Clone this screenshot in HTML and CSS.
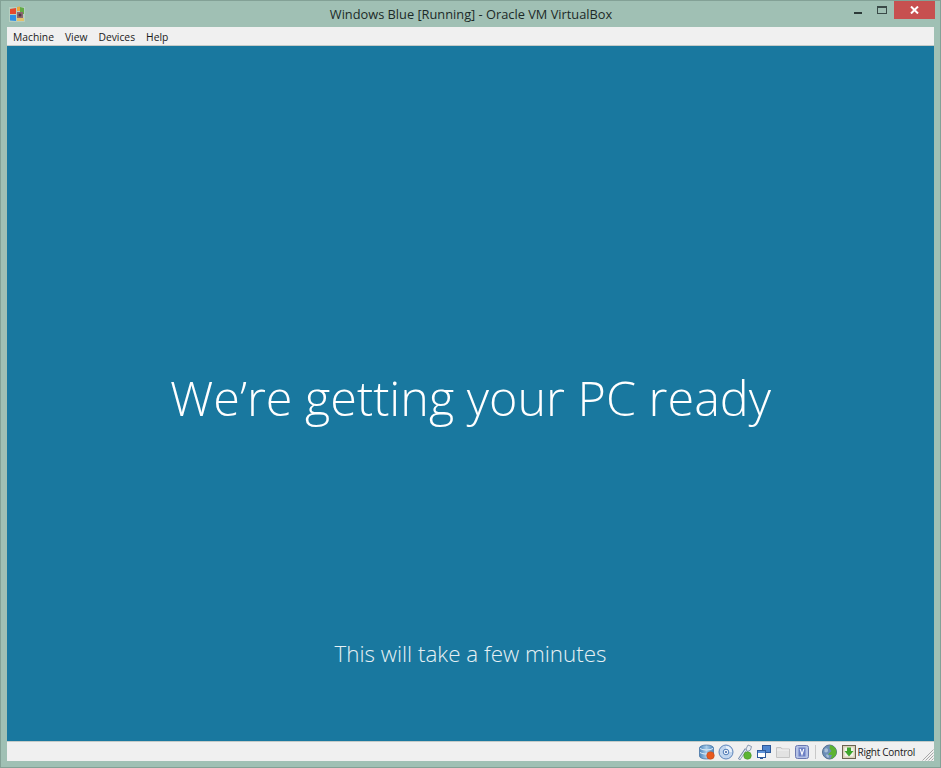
FILE: index.html
```html
<!DOCTYPE html>
<html lang="en">
<head>
<meta charset="utf-8">
<title>Windows Blue [Running] - Oracle VM VirtualBox</title>
<link rel="stylesheet" href="styles.css">
</head>
<body>
<div class="window">
  <header class="titlebar">
    <div class="brand">
      <svg class="app-icon" viewBox="0 0 16 16" width="16" height="16">
        <rect x="0" y="1" width="16" height="15" fill="#c9d8c8" opacity=".55"/>
        <path d="M1 3l6-1v6H1z" fill="#e4492e"/>
        <path d="M1 9h6v6l-6-.5z" fill="#2f8fe4"/>
        <path d="M8 1l3-.5V5H8z" fill="#eba63e"/>
        <path d="M11 1l4 1v6h-4z" fill="#62ab45"/>
        <rect x="8" y="6" width="6" height="6" fill="#8b6670"/>
        <circle cx="11" cy="9" r="1.500" fill="#4e3b44"/>
        <path d="M8 12h7v3H8z" fill="#e2c26c"/>
      </svg>
    </div>
    <div class="title">Windows Blue [Running] - Oracle VM VirtualBox</div>
    <div class="controls">
      <span class="ctl min"></span>
      <span class="ctl max"></span>
      <span class="ctl close">
        <svg viewBox="0 0 9 8" width="9" height="8"><path d="M1 .5l7 7M8 .5l-7 7" stroke="#fff" stroke-width="2" fill="none"/></svg>
      </span>
    </div>
  </header>
  <nav class="menubar">
    <span class="menu">Machine</span>
    <span class="menu">View</span>
    <span class="menu">Devices</span>
    <span class="menu">Help</span>
  </nav>
  <main class="screen">
    <h1 class="headline">We’re getting your PC ready</h1>
    <p class="subline">This will take a few minutes</p>
  </main>
  <footer class="statusbar">
    <svg class="si" viewBox="0 0 16 16" width="16" height="16"><defs><linearGradient id="hd" x1="0" y1="0" x2="1" y2="0"><stop offset="0" stop-color="#4d86bd"/><stop offset=".5" stop-color="#a9cdea"/><stop offset="1" stop-color="#4d86bd"/></linearGradient></defs><path d="M.5 4c0-4 14-4 14 0v8c0 4-14 4-14 0z" fill="url(#hd)" stroke="#3e6f9f" stroke-width=".7"/><path d="M1 4.500c3 2 10 2 13 0M1 8.500c3 2 10 2 13 0" stroke="#e6f1fa" fill="none"/><circle cx="11.500" cy="11.500" r="3.800" fill="#e85a1e" stroke="#b8441a" stroke-width=".5"/></svg>
    <svg class="si" viewBox="0 0 16 16" width="16" height="16"><circle cx="8" cy="8" r="7" fill="#c2d6ee" stroke="#5f86bb"/><path d="M8 2a6 6 0 0 1 6 6H8z" fill="#e9f1fa"/><circle cx="8" cy="8" r="2.800" fill="#eef5fb" stroke="#4f7cb8"/><circle cx="8" cy="8" r="1" fill="#4060a0"/></svg>
    <svg class="si" viewBox="0 0 16 16" width="16" height="16"><path d="M2 15.500L9 5" stroke="#6f86a8" stroke-width="2.600"/><path d="M2.500 15L9 5.500" stroke="#eef2f6" stroke-width="1.200"/><path d="M9 5l2-4 3.500 1.500-1 3.500-3 1.500z" fill="#e8edf3" stroke="#74859f" stroke-width=".8"/><circle cx="10.500" cy="11.500" r="3.800" fill="#5cb432" stroke="#408c22" stroke-width=".5"/></svg>
    <svg class="si" viewBox="0 0 16 16" width="16" height="16"><rect x="6.500" y="1.500" width="8" height="7" fill="#4f86cf" stroke="#2e5a9a"/><rect x="1.500" y="6.500" width="8" height="7" fill="#fff" stroke="#2e5a9a"/><rect x="2" y="7" width="7" height="2" fill="#5f94da"/><rect x="4" y="13.500" width="3" height="1.500" fill="#2e5a9a"/></svg>
    <svg class="si" viewBox="0 0 16 16" width="16" height="16"><path d="M1.500 3.500h4.500l1 1.500h7.500v8.500h-13z" fill="#e2e2e2" stroke="#c4c4c4"/><path d="M2 6h12" stroke="#f2f2f2"/></svg>
    <svg class="si" viewBox="0 0 16 16" width="16" height="16"><rect x="1.500" y="1.500" width="13" height="13" rx="2" fill="#b5c2e6" stroke="#6a78b0"/><rect x="4.500" y="3.500" width="7" height="9" fill="#6d80c4"/><path d="M6.200 5l1.800 5.500L9.800 5" stroke="#fff" stroke-width="1.100" fill="none"/></svg>
    <span class="sep"></span>
    <svg class="si" viewBox="0 0 16 16" width="16" height="16"><circle cx="7.500" cy="8" r="7" fill="#6d8fb8" stroke="#54708f"/><path d="M2.500 5c2-1.500 3.500-.5 3.500 1.500S4 9 2.500 8zM4 11c2-1 3 0 3 2.500H5z" fill="#a9bfd8"/><path d="M8 1c4 1 6.500 3.500 6.500 7s-2.500 6-6 7l1.500-4-4-.5L9.500 7l-2-2.500z" fill="#5cb432"/></svg>
    <svg class="si box" viewBox="0 0 16 16" width="16" height="16"><rect x="1.500" y="1.500" width="13" height="13" fill="#d9d2b8" stroke="#6a6350"/><rect x="3.500" y="3.500" width="9" height="9" fill="#f2f2ea"/><path d="M6 3.500h4v3.500h2.500L8 12.500 3.500 7H6z" fill="#3ea52c"/></svg>
    <span class="hostkey">Right Control</span>
    <svg class="grip" viewBox="0 0 12 12" width="12" height="12"><path d="M11.500 .5l-11 11M11.500 3.500l-8 8M11.500 6.500l-5 5M11.500 9.500l-2 2" stroke="#a8a8a8" fill="none"/></svg>
  </footer>
</div>
</body>
</html>
```
FILE: styles.css
```css
html, body {
  margin: 0;
  padding: 0;
}
body {
  width: 941px;
  height: 768px;
  overflow: hidden;
}
.window {
  box-sizing: border-box;
  width: 941px;
  height: 768px;
  display: flex;
  flex-direction: column;
  background: #a0c0b4;
  border: 1px solid #83a196;
  padding: 0 6px 6px;
  font-family: "Open Sans", "Liberation Sans", sans-serif;
}
.titlebar {
  height: 26px;
  flex: none;
  display: grid;
  grid-template-columns: 1fr auto 1fr;
  align-items: center;
  margin-right: -1px;
}
.brand {
  display: flex;
  align-items: center;
  padding-left: 2px;
}
.app-icon {
  margin-top: -1px;
}
.title {
  text-align: center;
  font-size: 12.800px;
  color: #1c2a28;
  margin-top: -1px;
}
.controls {
  display: flex;
  align-items: flex-start;
  justify-content: flex-end;
  align-self: start;
}
.ctl {
  display: flex;
  align-items: center;
  justify-content: center;
}
.min {
  width: 8px;
  height: 2px;
  background: #2c3a38;
  margin: 11px 15px 0 0;
}
.max {
  width: 8px;
  height: 5px;
  border: 1px solid #3a4a48;
  border-top-width: 2px;
  margin: 5px 7px 0 0;
}
.close {
  width: 41px;
  height: 18px;
  background: #c75050;
}
.menubar {
  height: 17px;
  padding-top: 1px;
  flex: none;
  display: flex;
  align-items: center;
  background: #f0f0f0;
  padding-left: 6px;
  gap: 11px;
  font-size: 10.300px;
  color: #1a1a1a;
  border-bottom: 1px solid #c4cbc8;
}
.screen {
  flex: 1;
  min-height: 0;
  background: #19789f;
  color: #fff;
  display: flex;
  flex-direction: column;
  align-items: center;
  font-weight: 300;
}
.headline {
  margin: 318px 0 0;
  font-size: 48.500px;
  line-height: 66px;
  font-weight: 300;
}
.subline {
  margin: 208px 0 0;
  font-size: 22.400px;
  line-height: 32px;
  color: #e6f0f4;
}
.statusbar {
  box-sizing: border-box;
  height: 20px;
  flex: none;
  display: flex;
  align-items: center;
  justify-content: flex-end;
  background: #f0f0f0;
  border-top: 1px solid #c4cbc8;
  font-size: 10px;
  color: #1a1a1a;
  gap: 3px;
}
.si {
  flex: none;
}
.sep {
  width: 1px;
  height: 14px;
  background: #c8c8c8;
  margin: 0 3px 0 2px;
}
.hostkey {
  margin-left: -2px;
  margin-right: 4px;
  letter-spacing: -0.280px;
}
.grip {
  margin-top: 7px;
  flex: none;
}
```
